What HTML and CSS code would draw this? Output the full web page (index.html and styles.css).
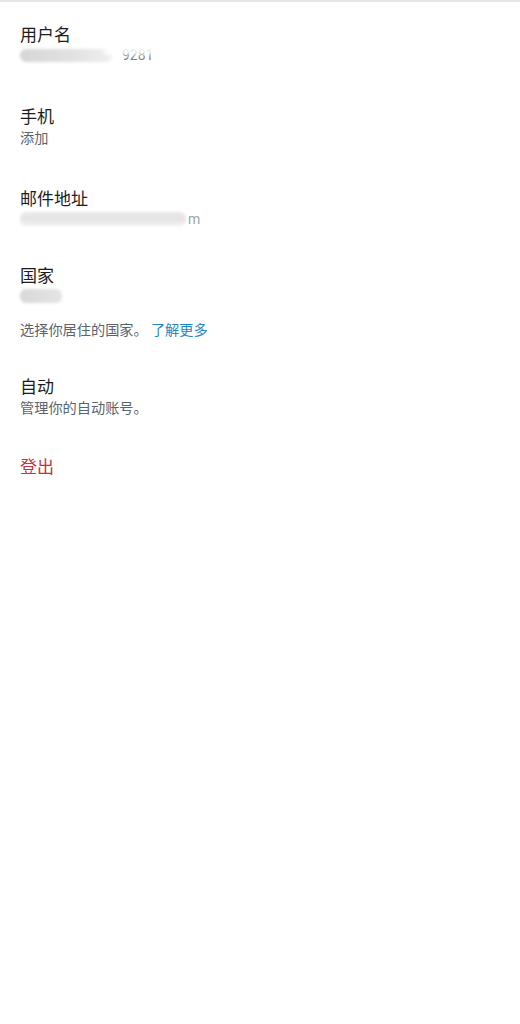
FILE: index.html
```html
<!DOCTYPE html>
<html lang="zh-CN">
<head>
<meta charset="utf-8">
<title>账号</title>
<link rel="stylesheet" href="styles.css">
</head>
<body>
<div class="page">
  <div class="list">
    <div class="item">
      <div class="title">用户名</div>
      <div class="sub redacted">
        <span class="smear smear-user"></span><span class="ghost">9281</span>
        <span class="wipe wipe-user"></span>
      </div>
    </div>
    <div class="item">
      <div class="title">手机</div>
      <div class="sub">添加</div>
    </div>
    <div class="item">
      <div class="title">邮件地址</div>
      <div class="sub redacted">
        <span class="smear smear-mail"></span><span class="ghost">m</span>
      </div>
    </div>
    <div class="item item-country">
      <div class="title">国家</div>
      <div class="sub redacted">
        <span class="smear smear-country"></span>
      </div>
      <div class="hint">选择你居住的国家。 <span class="link">了解更多</span></div>
    </div>
    <div class="item item-auto">
      <div class="title">自动</div>
      <div class="sub">管理你的自动账号。</div>
    </div>
    <div class="item item-logout">
      <div class="title logout">登出</div>
    </div>
  </div>
</div>
</body>
</html>
```

FILE: styles.css
```css
html, body {
  margin: 0;
  padding: 0;
  background: #ffffff;
}

body {
  font-family: "Noto Sans CJK SC", "Noto Sans", sans-serif;
  color: #222222;
}

.page {
  border-top: 2px solid #e6e6e6;
  min-height: 1022px;
}

.list {
  display: flex;
  flex-direction: column;
  padding: 21px 20px 0 20px;
}

.item {
  display: flex;
  flex-direction: column;
  margin-top: 40px;
}

.item:first-child {
  margin-top: 0;
}

.item-country {
  margin-top: 35px;
}

.item-auto {
  margin-top: 36px;
}

.item-logout {
  margin-top: 38px;
}

.title {
  font-size: 17px;
  line-height: 22px;
  color: #1c1c1c;
}

.sub {
  font-size: 14.2px;
  line-height: 20px;
  color: #5a646d;
}

.redacted {
  position: relative;
  display: flex;
  align-items: center;
  height: 20px;
}

.smear {
  display: block;
  height: 13px;
  border-radius: 6px;
  background: #dcdcdc;
  filter: blur(1.5px);
}

.smear-user {
  width: 92px;
  background: linear-gradient(90deg, #d6d6d6 0%, #e2e2e2 60%, #f0f0f0 100%);
}

.smear-mail {
  width: 166px;
  height: 14px;
  background: linear-gradient(180deg, #e9e9e9 0%, #e4e4e4 50%, #f2f2f2 100%);
}

.smear-country {
  width: 42px;
  height: 14px;
  background: linear-gradient(90deg, #d8d8d8 0%, #e4e4e4 100%);
}

.ghost {
  margin-left: 10px;
  color: #7c8186;
  font-family: "Roboto", "Noto Sans", sans-serif;
  font-size: 14px;
  line-height: 20px;
}

.smear-mail + .ghost {
  margin-left: 2px;
  color: #a0a4a8;
}

.wipe {
  position: absolute;
  display: block;
  background: rgba(255, 255, 255, 0.85);
  filter: blur(2px);
}

.wipe-user {
  left: 84px;
  top: 0;
  width: 90px;
  height: 10px;
}

.hint {
  margin-top: 13px;
  font-size: 14.2px;
  line-height: 20px;
  color: #5a646d;
}

.link {
  color: #1f88c2;
}

.logout {
  color: #c8323f;
}
```
